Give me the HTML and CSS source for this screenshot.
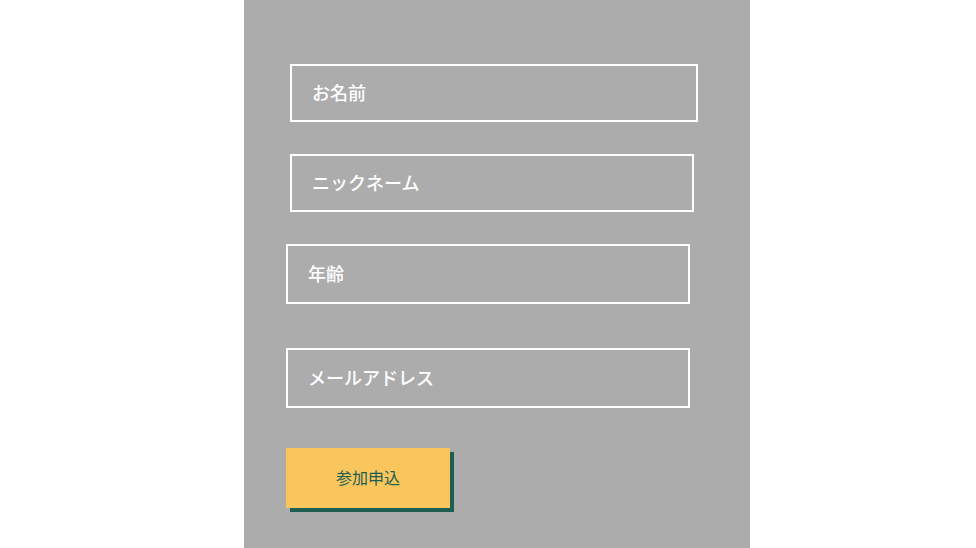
FILE: index.html
```html
<!DOCTYPE html>
<html lang="ja">
<head>
    <meta charset="UTF-8">
    <meta name="viewport" content="width=device-width, initial-scale=1.0">
    <title>参加申込</title>
    <link rel="stylesheet" href="styles.css">
</head>
<body>
    <div class="panel">
        <form class="entry-form">
            <input class="field field-name" type="text" placeholder="お名前">
            <input class="field field-nick" type="text" placeholder="ニックネーム">
            <input class="field field-age" type="text" placeholder="年齢">
            <input class="field field-mail" type="text" placeholder="メールアドレス">
            <button class="submit" type="button">参加申込</button>
        </form>
    </div>
</body>
</html>
```

FILE: styles.css
```css
html, body {
    margin: 0;
    height: 100%;
    background-color: #fff;
}
body {
    font-family: "Noto Sans CJK JP", "Noto Sans", sans-serif;
}
.panel {
    margin-left: 244px;
    width: 506px;
    height: 548px;
    background-color: #acacac;
    box-sizing: border-box;
    padding-top: 64px;
}
.entry-form {
    display: flex;
    flex-direction: column;
    align-items: flex-start;
}
.field {
    display: block;
    box-sizing: border-box;
    height: 58px;
    border: 2px solid #fff;
    background: transparent;
    padding: 0 0 3px 20px;
    margin: 0;
    font-family: inherit;
    font-size: 18px;
    font-weight: 500;
    color: #fff;
    outline: none;
}
.field::placeholder {
    color: #fff;
    opacity: 1;
}
.field-name {
    margin-left: 46px;
    width: 408px;
}
.field-nick {
    margin-left: 46px;
    margin-top: 32px;
    width: 404px;
}
.field-age {
    margin-left: 42px;
    margin-top: 32px;
    width: 404px;
    height: 60px;
}
.field-mail {
    margin-left: 42px;
    margin-top: 44px;
    width: 404px;
    height: 60px;
}
.submit {
    margin-left: 42px;
    margin-top: 40px;
    width: 164px;
    height: 60px;
    border: none;
    padding: 0 0 2px;
    background-color: #f8c65d;
    box-shadow: 4px 4px 0 #1d5e50;
    font-family: inherit;
    font-size: 16px;
    color: #1d5e50;
    cursor: pointer;
}
```
